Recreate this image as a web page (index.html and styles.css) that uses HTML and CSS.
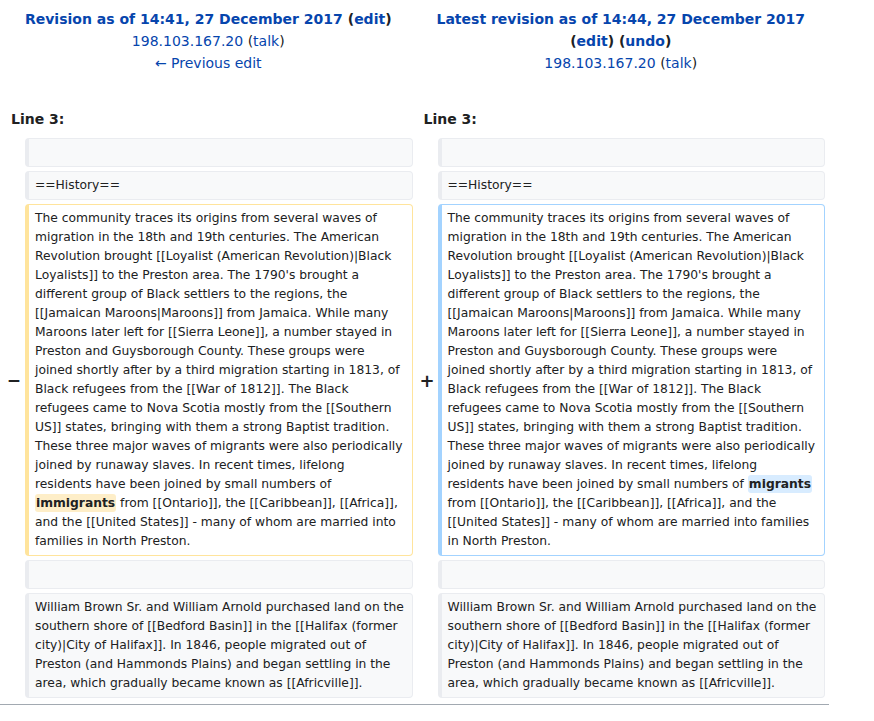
FILE: index.html
```html
<!DOCTYPE html>
<html lang="en">
<head>
<meta charset="utf-8">
<title>Difference between revisions</title>
<link rel="stylesheet" href="styles.css">
</head>
<body>
<div class="diff-wrap">
<table class="diff">
  <colgroup>
    <col class="col-marker">
    <col class="col-content">
    <col class="col-marker">
    <col class="col-content">
  </colgroup>
  <tr>
    <td colspan="2" class="diff-otitle">
      <div class="rev-title"><a href="#">Revision as of 14:41, 27 December 2017</a> <span class="paren">(<a href="#">edit</a>)</span></div>
      <div class="rev-user"><a href="#">198.103.167.20</a> <span class="paren">(<a href="#">talk</a>)</span></div>
      <div class="rev-nav"><a href="#">← Previous edit</a></div>
    </td>
    <td colspan="2" class="diff-ntitle">
      <div class="rev-title"><a href="#">Latest revision as of 14:44, 27 December 2017</a> <span class="paren">(<a href="#">edit</a>)</span> <span class="paren">(<a href="#">undo</a>)</span></div>
      <div class="rev-user"><a href="#">198.103.167.20</a> <span class="paren">(<a href="#">talk</a>)</span></div>
    </td>
  </tr>
  <tr>
    <td colspan="2" class="diff-lineno">Line 3:</td>
    <td colspan="2" class="diff-lineno">Line 3:</td>
  </tr>
  <tr>
    <td class="diff-marker"></td>
    <td class="diff-context"><div><br></div></td>
    <td class="diff-marker"></td>
    <td class="diff-context"><div><br></div></td>
  </tr>
  <tr>
    <td class="diff-marker"></td>
    <td class="diff-context"><div>==History==</div></td>
    <td class="diff-marker"></td>
    <td class="diff-context"><div>==History==</div></td>
  </tr>
  <tr>
    <td class="diff-marker marker-del">−</td>
    <td class="diff-deletedline"><div>The community traces its origins from several waves of migration in the 18th and 19th centuries. The American Revolution brought [[Loyalist (American Revolution)|Black Loyalists]] to the Preston area. The 1790's brought a different group of Black settlers to the regions, the [[Jamaican Maroons|Maroons]] from Jamaica. While many Maroons later left for [[Sierra Leone]], a number stayed in Preston and Guysborough County. These groups were joined shortly after by a third migration starting in 1813, of Black refugees from the [[War of 1812]]. The Black refugees came to Nova Scotia mostly from the [[Southern US]] states, bringing with them a strong Baptist tradition. These three major waves of migrants were also periodically joined by runaway slaves. In recent times, lifelong residents have been joined by small numbers of <del class="diffchange">immigrants</del> from [[Ontario]], the [[Caribbean]], [[Africa]], and the [[United States]] - many of whom are married into families in North Preston.</div></td>
    <td class="diff-marker marker-add">+</td>
    <td class="diff-addedline"><div>The community traces its origins from several waves of migration in the 18th and 19th centuries. The American Revolution brought [[Loyalist (American Revolution)|Black Loyalists]] to the Preston area. The 1790's brought a different group of Black settlers to the regions, the [[Jamaican Maroons|Maroons]] from Jamaica. While many Maroons later left for [[Sierra Leone]], a number stayed in Preston and Guysborough County. These groups were joined shortly after by a third migration starting in 1813, of Black refugees from the [[War of 1812]]. The Black refugees came to Nova Scotia mostly from the [[Southern US]] states, bringing with them a strong Baptist tradition. These three major waves of migrants were also periodically joined by runaway slaves. In recent times, lifelong residents have been joined by small numbers of <ins class="diffchange">migrants</ins> from [[Ontario]], the [[Caribbean]], [[Africa]], and the [[United States]] - many of whom are married into families in North Preston.</div></td>
  </tr>
  <tr>
    <td class="diff-marker"></td>
    <td class="diff-context"><div><br></div></td>
    <td class="diff-marker"></td>
    <td class="diff-context"><div><br></div></td>
  </tr>
  <tr>
    <td class="diff-marker"></td>
    <td class="diff-context"><div>William Brown Sr. and William Arnold purchased land on the southern shore of [[Bedford Basin]] in the [[Halifax (former city)|City of Halifax]]. In 1846, people migrated out of Preston (and Hammonds Plains) and began settling in the area, which gradually became known as [[Africville]].</div></td>
    <td class="diff-marker"></td>
    <td class="diff-context"><div>William Brown Sr. and William Arnold purchased land on the southern shore of [[Bedford Basin]] in the [[Halifax (former city)|City of Halifax]]. In 1846, people migrated out of Preston (and Hammonds Plains) and began settling in the area, which gradually became known as [[Africville]].</div></td>
  </tr>
</table>
</div>
</body>
</html>
```

FILE: styles.css
```css
html, body {
  margin: 0;
  padding: 0;
  background: #ffffff;
}

body {
  font-family: "DejaVu Sans", sans-serif;
  color: #202122;
  font-size: 14px;
}

a {
  color: #0645ad;
  text-decoration: none;
}

.diff-wrap {
  width: 829px;
  padding-bottom: 2px;
  border-bottom: 1px solid #a2a9b1;
}

.diff {
  width: 829px;
  border-spacing: 4px;
  table-layout: fixed;
}

.col-marker {
  width: 17px;
}

.diff td {
  padding: 0;
  vertical-align: top;
}

.diff-otitle,
.diff-ntitle {
  text-align: center;
  line-height: 22px;
  padding: 4px 0 30px 0 !important;
  font-size: 14px;
}

.rev-title {
  font-weight: bold;
}

.paren {
  color: #202122;
}

.diff-lineno {
  font-weight: bold;
  font-size: 14px;
  line-height: 22px;
  padding: 0 7px 4px 7px !important;
}

.diff .diff-marker {
  text-align: right;
  vertical-align: middle;
  font-weight: bold;
  font-size: 17px;
  padding: 0;
}

.diff .marker-add {
  font-size: 18px;
  padding-right: 0;
  text-align: center;
  padding-left: 3px;
}

.diff-context,
.diff-deletedline,
.diff-addedline {
  font-size: 12.3px;
  line-height: 19px;
  border-style: solid;
  border-width: 1px 1px 1px 4px;
  border-radius: 4px;
  padding: 4px 7px 4px 6px !important;
  word-wrap: break-word;
}

.diff-context {
  background: #f8f9fa;
  border-color: #eaecf0;
  color: #202122;
}

.diff-deletedline {
  border-color: #ffe49c;
}

.diff-addedline {
  border-color: #a3d3ff;
}

.diffchange {
  font-weight: bold;
  text-decoration: none;
  border-radius: 3px;
  padding: 2px 1px;
}

.diff-deletedline .diffchange {
  background: #feeec8;
}

.diff-addedline .diffchange {
  background: #d8ecff;
}
```
